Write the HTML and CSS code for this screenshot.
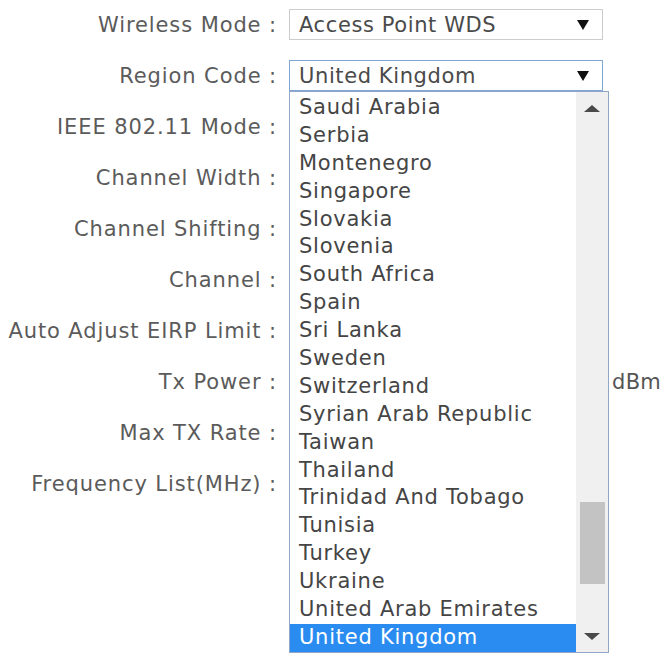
FILE: index.html
```html
<!DOCTYPE html>
<html>
<head>
<meta charset="utf-8">
<link rel="stylesheet" href="styles.css">
</head>
<body>
<div class="form">
  <div class="row"><div class="label">Wireless Mode :</div><div class="ctrl"><div class="select">Access Point WDS<span class="arrow"></span></div></div></div>
  <div class="row region"><div class="label">Region Code :</div><div class="ctrl">
    <div class="select focus">United Kingdom<span class="arrow"></span></div>
    <div class="dropdown">
      <ul class="list">
        <li>Saudi Arabia</li>
        <li>Serbia</li>
        <li>Montenegro</li>
        <li>Singapore</li>
        <li>Slovakia</li>
        <li>Slovenia</li>
        <li>South Africa</li>
        <li>Spain</li>
        <li>Sri Lanka</li>
        <li>Sweden</li>
        <li>Switzerland</li>
        <li>Syrian Arab Republic</li>
        <li>Taiwan</li>
        <li>Thailand</li>
        <li>Trinidad And Tobago</li>
        <li>Tunisia</li>
        <li>Turkey</li>
        <li>Ukraine</li>
        <li>United Arab Emirates</li>
        <li class="sel">United Kingdom</li>
      </ul>
      <div class="scrollbar">
        <span class="sb-up"></span>
        <span class="sb-track"><span class="sb-thumb"></span></span>
        <span class="sb-down"></span>
      </div>
    </div>
  </div></div>
  <div class="row"><div class="label">IEEE 802.11 Mode :</div><div class="ctrl"></div></div>
  <div class="row"><div class="label">Channel Width :</div><div class="ctrl"></div></div>
  <div class="row"><div class="label">Channel Shifting :</div><div class="ctrl"></div></div>
  <div class="row"><div class="label">Channel :</div><div class="ctrl"></div></div>
  <div class="row"><div class="label">Auto Adjust EIRP Limit :</div><div class="ctrl"></div></div>
  <div class="row"><div class="label">Tx Power :</div><div class="ctrl"><span class="unit">dBm</span></div></div>
  <div class="row"><div class="label">Max TX Rate :</div><div class="ctrl"></div></div>
  <div class="row"><div class="label">Frequency List(MHz) :</div><div class="ctrl"></div></div>
</div>
</body>
</html>
```
FILE: styles.css
```css
html, body {
  margin: 0;
  padding: 0;
  background: #ffffff;
}
body {
  font-family: "DejaVu Sans", Verdana, sans-serif;
  font-size: 21px;
  color: #555555;
  height: 656px;
  overflow: hidden;
}
.form {
  display: flex;
  flex-direction: column;
  gap: 2px;
  height: 656px;
}
.row {
  display: grid;
  grid-template-columns: 277px 1fr;
  column-gap: 12px;
  align-items: center;
  height: 49px;
  flex: none;
}
.label {
  text-align: right;
  white-space: nowrap;
  letter-spacing: 0.9px;
  color: #5b5b5b;
}
.ctrl {
  position: relative;
  display: flex;
  align-items: center;
}
.select {
  box-sizing: border-box;
  width: 314px;
  height: 31px;
  border: 1px solid #cccccc;
  padding: 0 0 0 9px;
  display: flex;
  align-items: center;
  justify-content: space-between;
  letter-spacing: 0.6px;
  color: #4a4a4a;
  background: #fff;
}
.select.focus {
  border-color: #7ea6d6;
}
.arrow {
  width: 0;
  height: 0;
  border-left: 6px solid transparent;
  border-right: 6px solid transparent;
  border-top: 10px solid #111;
  margin-right: 13px;
}
.unit {
  margin-left: 323px;
  color: #555;
  letter-spacing: 0.3px;
}
.dropdown {
  position: absolute;
  left: 0;
  top: 31px;
  box-sizing: border-box;
  width: 320px;
  height: 562px;
  border: 1px solid #8fa6c6;
  background: #fff;
  display: flex;
  z-index: 10;
}
.list {
  list-style: none;
  margin: 0;
  padding: 2px 0 0 0;
  flex: 1;
}
.list li {
  height: 27.9px;
  line-height: 27.9px;
  padding-left: 9px;
  letter-spacing: 0.75px;
  color: #454545;
  white-space: nowrap;
}
.list li.sel {
  background: #2a8cf0;
  color: #ffffff;
}
.scrollbar {
  width: 32px;
  background: #f0f0f0;
  display: flex;
  flex-direction: column;
  align-items: center;
}
.sb-up, .sb-down {
  height: 32px;
  width: 100%;
  display: flex;
  align-items: center;
  justify-content: center;
  flex: none;
}
.sb-up::after {
  content: "";
  border-left: 8px solid transparent;
  border-right: 8px solid transparent;
  border-bottom: 7px solid #4a4a4a;
}
.sb-down::after {
  content: "";
  border-left: 8px solid transparent;
  border-right: 8px solid transparent;
  border-top: 7px solid #4a4a4a;
}
.sb-track {
  flex: 1;
  width: 100%;
  display: flex;
  flex-direction: column;
  justify-content: flex-end;
  align-items: center;
  padding-bottom: 36px;
  box-sizing: border-box;
}
.sb-thumb {
  width: 25px;
  height: 82px;
  background: #c3c3c3;
}
```
